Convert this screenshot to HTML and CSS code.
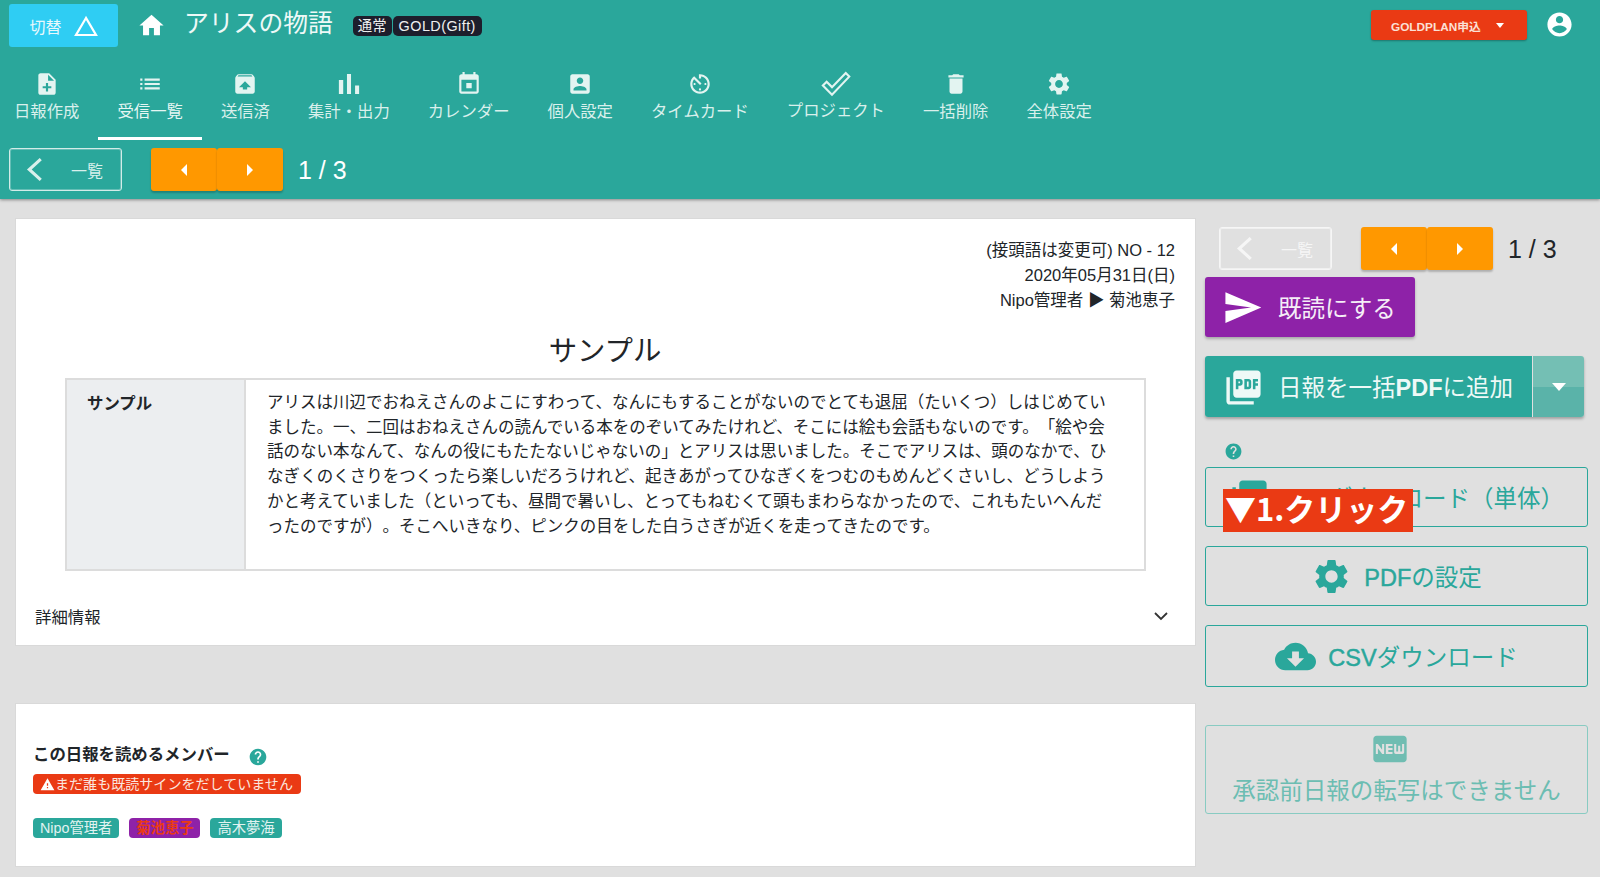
FILE: index.html
```html
<!DOCTYPE html>
<html lang="ja">
<head>
<meta charset="utf-8">
<title>アリスの物語</title>
<link rel="stylesheet" href="styles.css">
</head>
<body>
<svg class="defs" xmlns="http://www.w3.org/2000/svg">
  <symbol id="i-home" viewBox="0 0 24 24"><path d="M10 20v-6h4v6h5v-8h3L12 3 2 12h3v8z"/></symbol>
  <symbol id="i-note" viewBox="0 0 24 24"><path d="M14 2H6c-1.1 0-1.99.9-1.99 2L4 20c0 1.1.89 2 1.99 2H18c1.1 0 2-.9 2-2V8l-6-6zm2 14h-3v3h-2v-3H8v-2h3v-3h2v3h3v2zm-3-7V3.5L18.5 9H13z"/></symbol>
  <symbol id="i-list" viewBox="0 0 24 24"><path d="M3 13h2v-2H3v2zm0 4h2v-2H3v2zm0-8h2V7H3v2zm4 4h14v-2H7v2zm0 4h14v-2H7v2zM7 7v2h14V7H7z"/></symbol>
  <symbol id="i-unarchive" viewBox="0 0 24 24"><path d="M20.55 5.22l-1.39-1.68C18.88 3.21 18.47 3 18 3H6c-.47 0-.88.21-1.15.55L3.46 5.22C3.17 5.57 3 6.01 3 6.5V19c0 1.1.89 2 2 2h14c1.1 0 2-.9 2-2V6.5c0-.49-.17-.93-.45-1.28zM12 9.5l5.5 5.5H14v2h-4v-2H6.5L12 9.5zM5.12 5l.82-1h12l.93 1H5.12z"/></symbol>
  <symbol id="i-bar" viewBox="3 3 18 18"><path d="M5 9.2h3V19H5zM10.6 5h2.8v14h-2.8zm5.6 8H19v6h-2.8z"/></symbol>
  <symbol id="i-event" viewBox="0 0 24 24"><path d="M14.5 11h-5v5h5v-5zM16 1v2H8V1H6v2H5c-1.11 0-1.99.9-1.99 2L3 19c0 1.1.89 2 2 2h14c1.1 0 2-.9 2-2V5c0-1.1-.9-2-2-2h-1V1h-2zm3 18H5V8h14v11z"/></symbol>
  <symbol id="i-account" viewBox="0 0 24 24"><path d="M3 5v14c0 1.1.89 2 2 2h14c1.1 0 2-.9 2-2V5c0-1.1-.9-2-2-2H5c-1.11 0-2 .9-2 2zm12 4c0 1.66-1.34 3-3 3s-3-1.34-3-3 1.34-3 3-3 3 1.34 3 3zm-9 8c0-2 4-3.1 6-3.1s6 1.1 6 3.1v1H6v-1z"/></symbol>
  <symbol id="i-timer" viewBox="0 0 24 24"><path d="M11 17c0 .55.45 1 1 1s1-.45 1-1-.45-1-1-1-1 .45-1 1zm0-14v4h2V5.08c3.39.49 6 3.39 6 6.92 0 3.87-3.13 7-7 7s-7-3.13-7-7c0-1.68.59-3.22 1.58-4.42L12 13l1.41-1.41-6.8-6.8v.02C4.42 6.45 3 9.05 3 12c0 4.97 4.02 9 9 9 4.97 0 9-4.03 9-9s-4.03-9-9-9h-1zm7 9c0-.55-.45-1-1-1s-1 .45-1 1 .45 1 1 1 1-.45 1-1zM6 12c0 .55.45 1 1 1s1-.45 1-1-.45-1-1-1-1 .45-1 1z"/></symbol>
  <symbol id="i-check" viewBox="0 0 24 24"><path d="M1.5 13.2l3-3 4.3 4.3L19.8 3.2l2.8 2.9L8.8 20.6z" fill="none" stroke="currentColor" stroke-width="1.7"/></symbol>
  <symbol id="i-delete" viewBox="0 0 24 24"><path d="M6 19c0 1.1.9 2 2 2h8c1.1 0 2-.9 2-2V7H6v12zM19 4h-3.5l-1-1h-5l-1 1H5v2h14V4z"/></symbol>
  <symbol id="i-gear" viewBox="0 0 24 24"><path d="M19.14 12.94c.04-.3.06-.61.06-.94 0-.32-.02-.64-.07-.94l2.03-1.58c.18-.14.23-.41.12-.61l-1.92-3.32c-.12-.22-.37-.29-.59-.22l-2.39.96c-.5-.38-1.03-.7-1.62-.94l-.36-2.54c-.04-.24-.24-.41-.48-.41h-3.84c-.24 0-.43.17-.47.41l-.36 2.54c-.59.24-1.13.57-1.62.94l-2.39-.96c-.22-.08-.47 0-.59.22L2.74 8.87c-.12.21-.08.47.12.61l2.03 1.58c-.05.3-.09.63-.09.94s.02.64.07.94l-2.03 1.58c-.18.14-.23.41-.12.61l1.92 3.32c.12.22.37.29.59.22l2.39-.96c.5.38 1.03.7 1.62.94l.36 2.54c.05.24.24.41.48.41h3.84c.24 0 .44-.17.47-.41l.36-2.54c.59-.24 1.13-.56 1.62-.94l2.39.96c.22.08.47 0 .59-.22l1.92-3.32c.12-.22.07-.47-.12-.61l-2.01-1.58zM12 15.6c-1.98 0-3.6-1.62-3.6-3.6s1.62-3.6 3.6-3.6 3.6 1.62 3.6 3.6-1.62 3.6-3.6 3.6z"/></symbol>
  <symbol id="i-user" viewBox="0 0 24 24"><path d="M12 2C6.48 2 2 6.48 2 12s4.48 10 10 10 10-4.48 10-10S17.52 2 12 2zm0 3c1.66 0 3 1.34 3 3s-1.34 3-3 3-3-1.34-3-3 1.34-3 3-3zm0 14.2c-2.5 0-4.71-1.28-6-3.22.03-1.99 4-3.08 6-3.08 1.99 0 5.97 1.09 6 3.08-1.29 1.94-3.5 3.22-6 3.22z"/></symbol>
  <symbol id="i-send" viewBox="0 0 24 24"><path d="M2.01 21L23 12 2.01 3 2 10l15 2-15 2z"/></symbol>
  <symbol id="i-pdf" viewBox="0 0 24 24"><path d="M20 2H8c-1.1 0-2 .9-2 2v12c0 1.1.9 2 2 2h12c1.1 0 2-.9 2-2V4c0-1.1-.9-2-2-2zm-8.5 7.5c0 .83-.67 1.5-1.5 1.5H9v2H7.5V7H10c.83 0 1.5.67 1.5 1.5v1zm5 2c0 .83-.67 1.5-1.5 1.5h-2.5V7H15c.83 0 1.5.67 1.5 1.5v3zm4-3H19v1h1.5V11H19v2h-1.5V7h3v1.5zM9 9.5h1v-1H9v1zM4 6H2v14c0 1.1.9 2 2 2h14v-2H4V6zm10 5.5h1v-3h-1v3z"/></symbol>
  <symbol id="i-cloud" viewBox="0 0 24 24"><path d="M19.35 10.04C18.67 6.59 15.64 4 12 4 9.11 4 6.6 5.64 5.35 8.04 2.34 8.36 0 10.91 0 14c0 3.31 2.69 6 6 6h13c2.76 0 5-2.24 5-5 0-2.64-2.05-4.78-4.65-4.96zM17 13l-5 5-5-5h3V9h4v4h3z"/></symbol>
  <symbol id="i-new" viewBox="0 0 24 24"><path d="M20 4H4c-1.11 0-1.99.89-1.99 2L2 18c0 1.11.89 2 2 2h16c1.11 0 2-.89 2-2V6c0-1.11-.89-2-2-2zM8.5 15H7.3l-2.55-3.5V15H3.5V9h1.25l2.5 3.5V9H8.5v6zm5-4.74H11v1.12h2.5v1.26H11v1.11h2.5V15h-4V9h4v1.26zm7 3.74c0 .55-.45 1-1 1h-4c-.55 0-1-.45-1-1V9h1.25v4.51h1.13V9.99h1.25v3.51h1.12V9h1.25v5z"/></symbol>
  <symbol id="i-help" viewBox="0 0 24 24"><path d="M12 2C6.48 2 2 6.48 2 12s4.48 10 10 10 10-4.48 10-10S17.52 2 12 2zm1 17h-2v-2h2v2zm2.07-7.75l-.9.92C13.45 12.9 13 13.5 13 15h-2v-.5c0-1.1.45-2.1 1.17-2.83l1.24-1.26c.37-.36.59-.86.59-1.41 0-1.1-.9-2-2-2s-2 .9-2 2H8c0-2.21 1.79-4 4-4s4 1.79 4 4c0 .88-.36 1.68-.93 2.25z"/></symbol>
  <symbol id="i-warn" viewBox="0 0 24 24"><path d="M1 21h22L12 2 1 21zm12-3h-2v-2h2v2zm0-4h-2v-4h2v4z"/></symbol>
  <symbol id="i-tri" viewBox="0 0 24 24"><path d="M12 4L2 21h20z" fill="none" stroke="currentColor" stroke-width="2.2"/></symbol>
  <symbol id="i-left" viewBox="0 0 16 24"><path d="M14 2L3 12l11 10" fill="none" stroke="currentColor" stroke-width="3"/></symbol>
  <symbol id="i-down" viewBox="0 0 16 10"><path d="M2 2l6 6 6-6" fill="none" stroke="currentColor" stroke-width="1.8"/></symbol>
</svg>

<header class="header">
  <div class="topbar">
    <button class="switch">切替<svg class="switch-icon"><use href="#i-tri"/></svg></button>
    <svg class="home-icon"><use href="#i-home"/></svg>
    <h1 class="app-title">アリスの物語</h1>
    <div class="plan-badges"><span class="badge">通常</span><span class="badge">GOLD(Gift)</span></div>
    <button class="goldplan">GOLDPLAN申込<span class="caret"></span></button>
    <svg class="user-icon"><use href="#i-user"/></svg>
  </div>
  <nav class="nav">
    <a class="nav-item nav-first"><svg class="nav-icon"><use href="#i-note"/></svg>日報作成</a>
    <a class="nav-item nav-active"><svg class="nav-icon"><use href="#i-list"/></svg>受信一覧</a>
    <a class="nav-item"><svg class="nav-icon"><use href="#i-unarchive"/></svg>送信済</a>
    <a class="nav-item"><svg class="nav-icon"><use href="#i-bar"/></svg>集計・出力</a>
    <a class="nav-item"><svg class="nav-icon"><use href="#i-event"/></svg>カレンダー</a>
    <a class="nav-item"><svg class="nav-icon"><use href="#i-account"/></svg>個人設定</a>
    <a class="nav-item"><svg class="nav-icon"><use href="#i-timer"/></svg>タイムカード</a>
    <a class="nav-item"><svg class="nav-icon nav-icon-check"><use href="#i-check"/></svg>プロジェクト</a>
    <a class="nav-item"><svg class="nav-icon"><use href="#i-delete"/></svg>一括削除</a>
    <a class="nav-item"><svg class="nav-icon"><use href="#i-gear"/></svg>全体設定</a>
  </nav>
  <div class="pager pager-header">
    <button class="back"><svg class="back-icon"><use href="#i-left"/></svg><span>一覧</span></button>
    <div class="arrows">
      <button class="arrow"><span class="tri-left"></span></button>
      <button class="arrow"><span class="tri-right"></span></button>
    </div>
    <span class="count">1 / 3</span>
  </div>
</header>

<main class="main">
  <div class="left">
    <section class="card report">
      <div class="meta">(接頭語は変更可) NO - 12<br>2020年05月31日(日)<br>Nipo管理者 ▶ 菊池恵子</div>
      <h2 class="report-title">サンプル</h2>
      <table class="report-table">
        <tr>
          <th>サンプル</th>
          <td>アリスは川辺でおねえさんのよこにすわって、なんにもすることがないのでとても退屈（たいくつ）しはじめてい<br>ました。一、二回はおねえさんの読んでいる本をのぞいてみたけれど、そこには絵も会話もないのです。「絵や会<br>話のない本なんて、なんの役にもたたないじゃないの」とアリスは思いました。そこでアリスは、頭のなかで、ひ<br>なぎくのくさりをつくったら楽しいだろうけれど、起きあがってひなぎくをつむのもめんどくさいし、どうしよう<br>かと考えていました（といっても、昼間で暑いし、とってもねむくて頭もまわらなかったので、これもたいへんだ<br>ったのですが）。そこへいきなり、ピンクの目をした白うさぎが近くを走ってきたのです。</td>
        </tr>
      </table>
      <div class="details"><span>詳細情報</span><svg class="details-icon"><use href="#i-down"/></svg></div>
    </section>
    <section class="card members">
      <div class="members-head"><h3 class="members-title">この日報を読めるメンバー</h3><svg class="help help-members"><use href="#i-help"/></svg></div>
      <div class="alert-wrap"><span class="alert"><svg class="alert-icon"><use href="#i-warn"/></svg><span class="alert-text">まだ誰も既読サインをだしていません</span></span></div>
      <div class="tags">
        <span class="tag">Nipo管理者</span>
        <span class="tag tag-self">菊池恵子</span>
        <span class="tag">高木夢海</span>
      </div>
    </section>
  </div>

  <aside class="side">
    <div class="pager pager-side">
      <button class="back back-light"><svg class="back-icon"><use href="#i-left"/></svg><span>一覧</span></button>
      <div class="arrows">
        <button class="arrow"><span class="tri-left"></span></button>
        <button class="arrow"><span class="tri-right"></span></button>
      </div>
      <span class="count">1 / 3</span>
    </div>
    <button class="btn-read"><svg class="btn-icon"><use href="#i-send"/></svg>既読にする</button>
    <div class="split">
      <button class="split-main"><svg class="btn-icon"><use href="#i-pdf"/></svg><span class="split-label">日報を一括<b>PDF</b>に追加</span></button>
      <button class="split-drop"><span class="caret caret-big"></span></button>
    </div>
    <svg class="help help-side"><use href="#i-help"/></svg>
    <button class="btn-outline btn-single"><svg class="btn-icon"><use href="#i-pdf"/></svg><span><b>PDF</b>ダウンロード（単体）</span>
      <span class="callout">▼1.クリック</span>
    </button>
    <button class="btn-outline btn-settings"><svg class="btn-icon"><use href="#i-gear"/></svg><span><b>PDF</b>の設定</span></button>
    <button class="btn-outline btn-csv"><svg class="btn-icon"><use href="#i-cloud"/></svg><span><b>CSV</b>ダウンロード</span></button>
    <button class="btn-disabled"><svg class="new-icon"><use href="#i-new"/></svg><span>承認前日報の転写はできません</span></button>
  </aside>
</main>
</body>
</html>
```

FILE: styles.css
```css
* { box-sizing: border-box; }
html, body { margin: 0; background: #e0e0e0; }
body {
  height: 877px;
  overflow: hidden;
  font-family: "Liberation Sans", "Noto Sans CJK JP", sans-serif;
  font-size: 16.4px;
  color: #212529;
  text-spacing-trim: space-all;
}
button { font-family: inherit; margin: 0; cursor: pointer; }
.defs { display: none; }
svg { fill: currentColor; display: block; flex: none; }

/* header */
.header {
  height: 199px;
  padding-top: 0.01px;
  background: #2aa79b;
  color: #fff;
  box-shadow: 0 1px 3px rgba(0,0,0,.4);
  position: relative;
}
.topbar { display: flex; align-items: center; height: 47px; padding: 4px 0 0 9px; }
.switch {
  width: 109px; height: 43px;
  background: #2fcdf3;
  border: 0; border-radius: 3px;
  color: #e8f8fc;
  font-size: 16px;
  display: flex; align-items: center; justify-content: center; gap: 12px;
}
.switch-icon { width: 24px; height: 24px; color: #fff; }
.home-icon { width: 29px; height: 29px; margin: 0 0 0 19px; }
.app-title { font-size: 24.8px; font-weight: 400; margin: -4px 0 0 18px; line-height: 34px; color: #eef9f7; }
.plan-badges { display: flex; gap: 1px; margin: 0 0 0 20px; }
.badge {
  height: 20px; padding: 0 5px;
  background: #1d1e2c; color: #f0f0f0;
  border-radius: 5px;
  font-size: 14.4px; line-height: 20px;
}
.badge + .badge { padding: 0 6px; letter-spacing: .45px; }
.goldplan {
  width: 156px; height: 30px;
  margin: -1px 0 0 auto;
  background: #ea3a14; border: 0; border-radius: 3px;
  color: #fbe0d6; font-size: 11.8px; font-weight: 700;
  box-shadow: 0 1px 2px rgba(0,0,0,.3);
  display: flex; align-items: center; gap: 15px;
  padding: 0 0 0 20px;
  white-space: nowrap;
}
.caret { display: block; width: 0; height: 0; border: 4px solid transparent; border-top: 5px solid #fff; border-bottom: 0; }
.caret-big { border-width: 7px; border-top-width: 8px; border-bottom-width: 0; }
.user-icon { width: 29px; height: 29px; margin: -2px 26px 0 18px; }

.nav { display: flex; margin-top: 13px; height: 80px; }
.nav-item {
  display: flex; flex-direction: column; align-items: center;
  padding: 11px 19px 0;
  color: #d9f0ec;
  font-size: 16.38px;
  line-height: 24px;
  white-space: nowrap;
}
.nav-first { padding-left: 14px; }
.nav-active { border-bottom: 3px solid #fff; color: #e6f6f3; }
.nav-icon { width: 26px; height: 26px; margin-bottom: 2px; color: #e3f4f1; }
.nav-icon-check { width: 30px; height: 30px; margin: -2px -1px -1px -1px; }

.pager { display: flex; align-items: center; }
.pager-header { margin: 8px 0 0 9px; }
.pager-side { margin-left: 14px; color: #212529; }
.back {
  width: 113px; height: 43px;
  background: transparent;
  border: 1px solid #d3ece8; outline: 1px solid rgba(211,236,232,.35); outline-offset: -2px;
  border-radius: 3px;
  color: #d9f0ec;
  font-size: 16px;
  display: flex; align-items: center; padding: 0 0 0 16px; gap: 28px;
}
.back-light { border-color: #f6f6f6; outline-color: rgba(246,246,246,.7); color: #f6f6f6; }
.back-icon { width: 17px; height: 25px; }
.arrows { display: flex; margin-left: 29px; }
.arrow {
  width: 66px; height: 43px;
  background: #ff9800; border: 0; border-radius: 3px;
  box-shadow: 0 2px 2px rgba(0,0,0,.22);
  display: flex; align-items: center; justify-content: center;
}
.tri-left, .tri-right { display: block; width: 0; height: 0; border: 6px solid transparent; }
.tri-left { border-right: 6px solid #fff; border-left: 0; }
.tri-right { border-left: 6px solid #fff; border-right: 0; }
.count { font-size: 25px; margin: 2px 0 0 15px; white-space: pre; }

/* main */
.main { display: flex; align-items: flex-start; }
.left { width: 1181px; margin: 19px 0 0 15px; }
.card { background: #fff; border: 1px solid #d9d9d9; }
.report { height: 428px; padding: 19px 20px 0 0; }
.meta { text-align: right; line-height: 25px; font-size: 16.5px; }
.report-title { font-size: 28.4px; font-weight: 400; text-align: center; line-height: 40px; margin: 18px -19px 0 0; }
.report-table {
  table-layout: fixed;
  border-collapse: collapse;
  width: 1081px;
  height: 193px;
  margin: 7px 0 0 49px;
}
.report-table th, .report-table td { border: 2px solid #dcdcdc; vertical-align: top; }
.report-table th {
  width: 179px;
  background: #eceef0;
  text-align: left;
  padding: 11px 0 0 20px;
  line-height: 24px;
}
.report-table td {
  padding: 10px 0 0 21px;
  font-size: 16.5px;
  line-height: 24.7px;
  white-space: nowrap;
}
.details {
  display: flex; justify-content: space-between; align-items: center;
  height: 50px; margin: 20px 0 0 19px;
}
.details-icon { width: 16px; height: 10px; margin-right: 6px; color: #333; }
.members { height: 164px; margin-top: 57px; padding: 37px 0 0 17px; }
.members-head { display: flex; align-items: center; height: 26px; }
.members-title { font-size: 16.4px; font-weight: 700; margin: 0; line-height: 26px; }
.help { color: #2aa79b; width: 20px; height: 20px; }
.help-members { margin: 6px 0 0 18px; }
.alert-wrap { margin-top: 7px; display: flex; height: 20px; }
.alert {
  display: flex; align-items: center;
  width: 268px; height: 20px;
  padding-left: 7px;
  background: #ea3a14; color: #fbe6df;
  border-radius: 4px;
  font-size: 14.05px;
}
.alert-text { margin-top: -3px; }
.alert-icon { width: 15px; height: 15px; color: #fff; }
.tags { display: flex; gap: 10px; margin-top: 24px; }
.tag {
  height: 20px; padding: 0 7px;
  background: #2aa79b; color: #e1f3f1;
  border-radius: 4px;
  font-size: 14.3px; line-height: 20px;
}
.tag-self { background: #8e22a8; color: #ea3a14; font-weight: 700; }

/* side */
.side { width: 383px; margin: 28px 0 0 9px; display: flex; flex-direction: column; align-items: flex-start; }
.btn-icon { width: 41px; height: 41px; }
.btn-read {
  width: 210px; height: 60px;
  margin-top: 7px;
  background: #8e22a8; color: #f5eef7;
  border: 0; border-radius: 3px;
  box-shadow: 0 2px 3px rgba(0,0,0,.25);
  font-size: 23.5px;
  display: flex; align-items: center; gap: 15px; padding: 0 0 0 17px;
}
.btn-read .btn-icon { color: #fff; }
.split {
  display: flex; width: 379px; height: 61px;
  margin-top: 19px;
  border-radius: 3px;
  box-shadow: 0 2px 3px rgba(0,0,0,.28);
  overflow: hidden;
}
.split-main {
  flex: 1; border: 0;
  background: #2aa79b; color: #eef9f7;
  font-size: 23.5px;
  display: flex; align-items: center; gap: 14px; padding: 0 0 0 18px;
  white-space: nowrap;
}
.split-main .btn-icon { margin-top: 2px; }
.split-label { margin-top: -2px; }
.split-drop {
  width: 51px; border: 0; margin-left: 1px;
  background: linear-gradient(#74bfb4 50%, #5ab3a9 50%);
  display: flex; align-items: center; justify-content: center;
}
.help-side { width: 19px; height: 19px; margin: 25px 0 6px 19px; }
.btn-outline {
  position: relative;
  width: 383px; height: 60px;
  background: transparent;
  border: 1px solid #2aa79b; border-radius: 3px;
  color: #2aa79b;
  font-size: 23.5px;
  display: flex; align-items: center; justify-content: center; gap: 12px;
  white-space: nowrap;
  padding: 0;
}
.btn-outline b { font-weight: 400; -webkit-text-stroke: .45px currentColor; }
.btn-settings { margin-top: 19px; }
.btn-csv { margin-top: 19px; height: 62px; }
.callout {
  position: absolute; left: 17px; top: 21px;
  width: 190px; height: 43px;
  padding-left: 2px;
  background: #ea3a14; color: #fff;
  font-family: "Noto Sans CJK JP", sans-serif;
  font-size: 31px; font-weight: 700; line-height: 38px;
  text-align: left;
  white-space: nowrap;
}
.btn-disabled {
  width: 383px; height: 89px;
  margin-top: 38px;
  background: transparent;
  border: 1px solid #88cbc2; border-radius: 3px;
  color: #6cbdb2;
  font-size: 23.5px;
  display: flex; flex-direction: column; align-items: center;
  padding: 3px 0 0;
  white-space: nowrap;
}
.new-icon { width: 40px; height: 40px; color: #70bdb2; margin: 0 14px 3px 0; }
```
